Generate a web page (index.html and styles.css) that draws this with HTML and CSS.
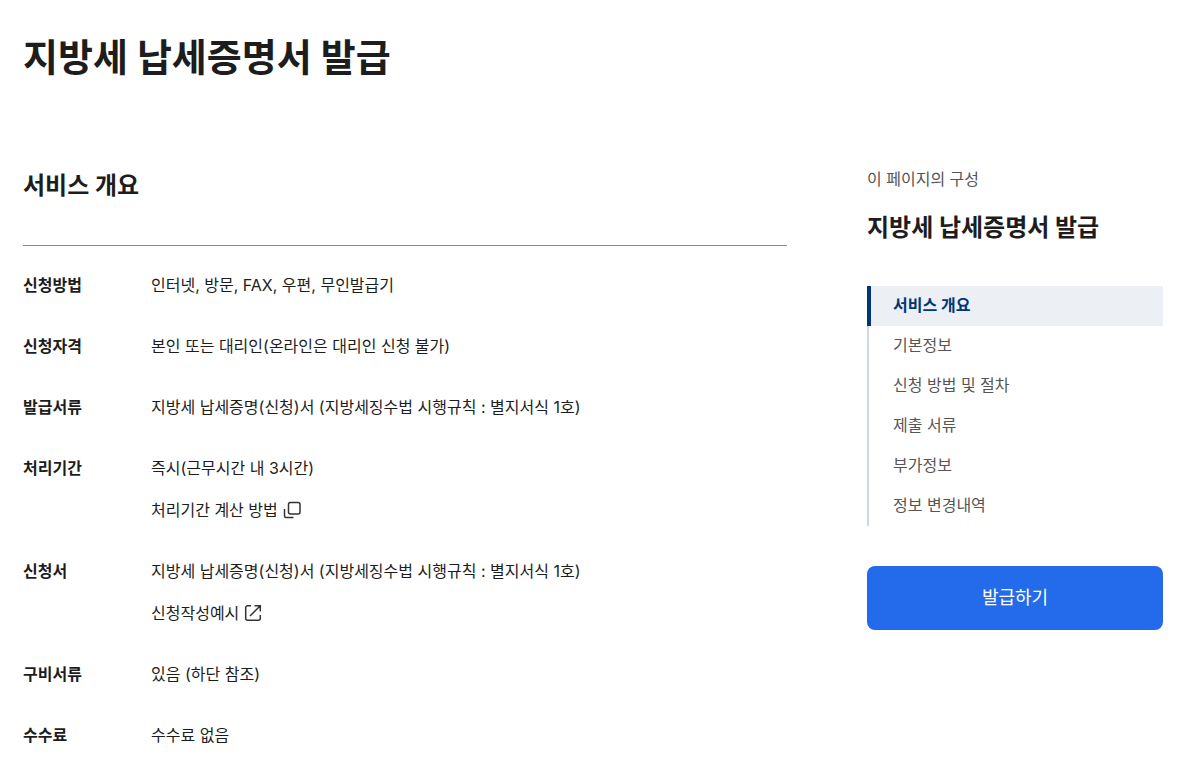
FILE: index.html
```html
<!DOCTYPE html>
<html lang="ko">
<head>
<meta charset="utf-8">
<meta name="viewport" content="width=device-width, initial-scale=1">
<title>지방세 납세증명서 발급</title>
<link rel="stylesheet" href="styles.css">
</head>
<body>
<main class="page">
  <h1 class="page-title">지방세 납세증명서 발급</h1>
  <div class="layout">
    <section class="overview" id="overview">
      <h2 class="section-title">서비스 개요</h2>
      <dl class="info">
        <div class="info-row"><dt>신청방법</dt><dd>인터넷, 방문, FAX, 우편, 무인발급기</dd></div>
        <div class="info-row"><dt>신청자격</dt><dd>본인 또는 대리인(온라인은 대리인 신청 불가)</dd></div>
        <div class="info-row"><dt>발급서류</dt><dd>지방세 납세증명(신청)서 (지방세징수법 시행규칙 : 별지서식 1호)</dd></div>
        <div class="info-row"><dt>처리기간</dt><dd>즉시(근무시간 내 3시간)
          <button class="text-link" type="button">처리기간 계산 방법
            <svg class="icon" viewBox="0 0 20 20" aria-hidden="true"><rect x="6.500" y="2.500" width="11.500" height="11.500" rx="2"/><path d="M2.500 9v7a1.500 1.500 0 0 0 1.500 1.500h7.500"/></svg>
          </button></dd></div>
        <div class="info-row"><dt>신청서</dt><dd>지방세 납세증명(신청)서 (지방세징수법 시행규칙 : 별지서식 1호)
          <a class="text-link" href="#example">신청작성예시
            <svg class="icon" viewBox="0 0 20 20" aria-hidden="true"><path d="M8 2.700H4.700a2 2 0 0 0-2 2v10.600a2 2 0 0 0 2 2h10.600a2 2 0 0 0 2-2V12M11.500 2.700h5.800v5.800M17.300 2.700L7 13"/></svg>
          </a></dd></div>
        <div class="info-row"><dt>구비서류</dt><dd>있음 (하단 참조)</dd></div>
        <div class="info-row"><dt>수수료</dt><dd>수수료 없음</dd></div>
      </dl>
    </section>
    <aside class="side">
      <p class="side-caption">이 페이지의 구성</p>
      <h2 class="side-title">지방세 납세증명서 발급</h2>
      <nav class="side-nav" aria-label="이 페이지의 구성">
        <a class="side-link active" href="#overview" aria-current="true">서비스 개요</a>
        <a class="side-link" href="#basic">기본정보</a>
        <a class="side-link" href="#process">신청 방법 및 절차</a>
        <a class="side-link" href="#documents">제출 서류</a>
        <a class="side-link" href="#extra">부가정보</a>
        <a class="side-link" href="#history">정보 변경내역</a>
      </nav>
      <button class="issue" type="button">발급하기</button>
    </aside>
  </div>
</main>
</body>
</html>
```
FILE: styles.css
```css
* { box-sizing: border-box; }
body {
  margin: 0;
  background: #fff;
  color: #1d1d1d;
  font: 16px/24px Inter, "Noto Sans CJK KR", sans-serif;
}
h1, h2, p, dl, dd { margin: 0; }
.page { padding: 27px 25px 0 23px; }
.page-title { font-size: 38px; line-height: 60px; font-weight: 700; }
.layout {
  display: grid;
  grid-template-columns: minmax(0, 1fr) 296px;
  gap: 80px;
  align-items: start;
  margin-top: 80px;
}
.section-title {
  padding: 1px 0 41px;
  border-bottom: 1px solid #8a8a8a;
  font-size: 24px;
  line-height: 36px;
}
.info { display: grid; gap: 37px; padding-top: 27px; }
.info-row { display: grid; grid-template-columns: 128px minmax(0, 1fr); }
dt { font-weight: 700; }
.text-link {
  display: flex;
  align-items: center;
  width: fit-content;
  gap: 4px;
  margin-top: 18px;
  padding: 0;
  border: 0;
  background: none;
  color: inherit;
  font: inherit;
  text-decoration: none;
  cursor: pointer;
}
.icon { width: 20px; height: 20px; fill: none; stroke: #333; stroke-width: 1.500; }
.side-caption { color: #555; }
.side-title { margin-top: 19px; font-size: 24px; line-height: 36px; }
.side-nav { display: flex; flex-direction: column; margin-top: 40px; }
.side-link {
  padding: 7px 24px 9px;
  border-left: 2px solid #cdd6e2;
  color: #555;
  text-decoration: none;
}
.side-link.active {
  padding-left: 22px;
  border-left: 4px solid #003675;
  background: #eceff4;
  color: #003675;
  font-weight: 700;
}
.issue {
  width: 100%;
  height: 64px;
  margin-top: 40px;
  border: 0;
  border-radius: 8px;
  background: #246beb;
  color: #fff;
  font: inherit;
  font-size: 18px;
  cursor: pointer;
}
```
